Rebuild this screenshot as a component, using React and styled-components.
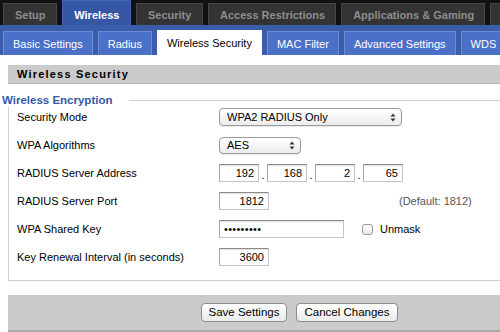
import React from "react";
import styled, { createGlobalStyle } from "styled-components";

const Global = createGlobalStyle`
  html, body { margin: 0; padding: 0; background: #fff; overflow: hidden; }
  body { font-family: "Liberation Sans", Arial, sans-serif; font-size: 11px; color: #000; }
`;

const Page = styled.div`
  width: 590px;
`;

const TopNav = styled.div`
  height: 25px;
  background: #111;
  display: flex;
  align-items: flex-end;
  gap: 5px;
  padding-left: 3px;
`;

const TopTab = styled.div`
  box-sizing: border-box;
  height: ${(p) => (p.$active ? 25 : 22)}px;
  min-width: ${(p) => (p.$blank ? 100 : 0)}px;
  padding: 0 11px;
  display: flex;
  align-items: center;
  padding-top: ${(p) => (p.$active ? 3 : 0)}px;
  font-weight: bold;
  font-size: 11px;
  white-space: nowrap;
  background: ${(p) => (p.$active ? "#3456a3" : "#333")};
  color: ${(p) => (p.$active ? "#fff" : "#8e8e8e")};
  border: 1px solid ${(p) => (p.$active ? "#4466b4" : "#474747")};
  border-bottom: none;
`;

const SubNav = styled.div`
  height: 30px;
  box-sizing: border-box;
  background: #3a5ca9;
  display: flex;
  align-items: flex-end;
  gap: 5px;
  padding-left: 3px;
`;

const SubTab = styled.div`
  box-sizing: border-box;
  height: ${(p) => (p.$active ? 25 : 24)}px;
  padding: 0 9px;
  display: flex;
  align-items: center;
  white-space: nowrap;
  font-size: 11px;
  background: ${(p) => (p.$active ? "#fff" : "#4b70c7")};
  color: ${(p) => (p.$active ? "#000" : "#fff")};
  border: 1px solid ${(p) => (p.$active ? "#fff" : "#6a8cd6")};
  border-bottom: none;
`;

const Content = styled.div`
  padding-top: 10px;
`;

const SectionBar = styled.div`
  margin-left: 8px;
  height: 18px;
  background: #cbcbcb;
  border-bottom: 1px solid #b4b4b4;
  display: flex;
  align-items: center;
  padding-left: 9px;
  font-weight: bold;
  font-size: 11px;
  letter-spacing: 1.2px;
`;

const LegendRow = styled.div`
  margin-top: 9px;
  height: 14px;
  display: flex;
  align-items: center;
  padding-left: 2px;
`;

const LegendText = styled.span`
  position: relative;
  z-index: 1;
  background: #fff;
  color: #3557a6;
  font-weight: bold;
  font-size: 11.5px;
  line-height: 14px;
`;

const LegendLine = styled.div`
  flex: 1;
  height: 1px;
  background: #cfcfcf;
  margin-left: 17px;
`;

const FieldBody = styled.div`
  margin-top: -4px;
  margin-left: 8px;
  border-left: 1px solid #cfcfcf;
  border-bottom: 1px solid #cfcfcf;
  padding-bottom: 9px;
`;

const Row = styled.div`
  height: 28px;
  display: flex;
  align-items: center;
  padding-left: 8px;
`;

const Label = styled.div`
  width: 202px;
  flex: none;
`;

const Controls = styled.div`
  display: flex;
  align-items: center;
`;

const SelectBox = styled.div`
  box-sizing: border-box;
  width: ${(p) => p.$w}px;
  height: ${(p) => p.$h}px;
  border: 1px solid #9a9a9a;
  border-radius: 4px;
  background: linear-gradient(#ffffff, #ececec);
  box-shadow: 0 1px 0 rgba(0, 0, 0, 0.08);
  display: flex;
  align-items: center;
  justify-content: space-between;
  padding: 0 5px 0 7px;
  font-size: 11px;
`;

const Arrows = () => (
  <svg width="6" height="9" viewBox="0 0 6 9">
    <path d="M3 0.5 L5.5 3.5 H0.5 Z" fill="#333" />
    <path d="M3 8.5 L5.5 5.5 H0.5 Z" fill="#333" />
  </svg>
);

const TextBox = styled.div`
  box-sizing: border-box;
  width: ${(p) => p.$w}px;
  height: 18px;
  border: 1px solid #c4c4c4;
  border-top-color: #8a8a8a;
  border-left-color: #a8a8a8;
  box-shadow: inset 0 1px 1px rgba(0, 0, 0, 0.12);
  background: #fff;
  display: flex;
  align-items: center;
  justify-content: ${(p) => (p.$left ? "flex-start" : "flex-end")};
  padding: 0 4px;
  font-size: 11px;
  letter-spacing: ${(p) => (p.$left ? "0.3px" : "0")};
`;

const Dot = styled.span`
  width: 8px;
  text-align: center;
  align-self: flex-end;
  line-height: 14px;
`;

const Hint = styled.span`
  margin-left: 130px;
  color: #555;
`;

const Check = styled.span`
  box-sizing: border-box;
  width: 11px;
  height: 11px;
  margin-left: 18px;
  border: 1px solid #9a9a9a;
  border-radius: 3px;
  background: linear-gradient(#fff, #e8e8e8);
`;

const CheckLabel = styled.span`
  margin-left: 7px;
`;

const Footer = styled.div`
  margin-top: 14px;
  margin-left: 8px;
  height: 35px;
  background: #cbcbcb;
  border-bottom: 2px solid #a8a8a8;
  display: flex;
  align-items: center;
  justify-content: center;
  gap: 9px;
`;

const Button = styled.button`
  box-sizing: border-box;
  height: 19px;
  padding: 0 7px;
  border: 1px solid #8c8c8c;
  border-radius: 4px;
  background: linear-gradient(#ffffff, #ebebeb);
  font-family: "Liberation Sans", Arial, sans-serif;
  font-size: 11.5px;
  color: #000;
  line-height: 17px;
`;

export default function App() {
  const top = ["Setup", "Wireless", "Security", "Access Restrictions", "Applications & Gaming"];
  const sub = ["Basic Settings", "Radius", "Wireless Security", "MAC Filter", "Advanced Settings", "WDS"];
  return (
    <Page>
      <Global />
      <TopNav>
        {top.map((t) => (
          <TopTab key={t} $active={t === "Wireless"}>{t}</TopTab>
        ))}
        <TopTab $blank />
      </TopNav>
      <SubNav>
        {sub.map((t) => (
          <SubTab key={t} $active={t === "Wireless Security"}>{t}</SubTab>
        ))}
      </SubNav>
      <Content>
        <SectionBar>Wireless Security</SectionBar>
        <LegendRow>
          <LegendText>Wireless Encryption</LegendText>
          <LegendLine />
        </LegendRow>
        <FieldBody>
          <Row>
            <Label>Security Mode</Label>
            <Controls>
              <SelectBox $w={183} $h={18}>
                <span>WPA2 RADIUS Only</span>
                <Arrows />
              </SelectBox>
            </Controls>
          </Row>
          <Row>
            <Label>WPA Algorithms</Label>
            <Controls>
              <SelectBox $w={82} $h={17}>
                <span>AES</span>
                <Arrows />
              </SelectBox>
            </Controls>
          </Row>
          <Row>
            <Label>RADIUS Server Address</Label>
            <Controls>
              <TextBox $w={40}>192</TextBox>
              <Dot>.</Dot>
              <TextBox $w={40}>168</TextBox>
              <Dot>.</Dot>
              <TextBox $w={40}>2</TextBox>
              <Dot>.</Dot>
              <TextBox $w={40}>65</TextBox>
            </Controls>
          </Row>
          <Row>
            <Label>RADIUS Server Port</Label>
            <Controls>
              <TextBox $w={50}>1812</TextBox>
              <Hint>(Default: 1812)</Hint>
            </Controls>
          </Row>
          <Row>
            <Label>WPA Shared Key</Label>
            <Controls>
              <TextBox $w={125} $left>•••••••••</TextBox>
              <Check />
              <CheckLabel>Unmask</CheckLabel>
            </Controls>
          </Row>
          <Row>
            <Label>Key Renewal Interval (in seconds)</Label>
            <Controls>
              <TextBox $w={50}>3600</TextBox>
            </Controls>
          </Row>
        </FieldBody>
        <Footer>
          <Button>Save Settings</Button>
          <Button>Cancel Changes</Button>
        </Footer>
      </Content>
    </Page>
  );
}
